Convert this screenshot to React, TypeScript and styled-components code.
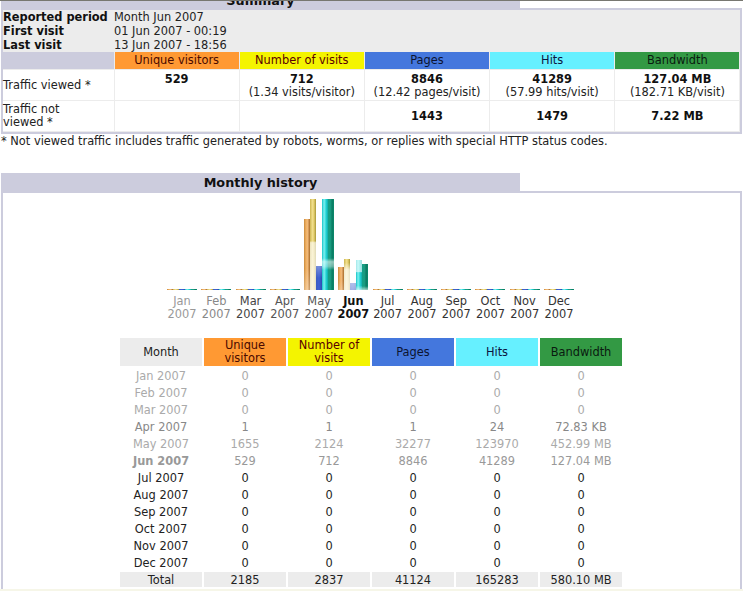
import React from "react";
import styled, { createGlobalStyle } from "styled-components";

const Global = createGlobalStyle`
  html, body { margin: 0; padding: 0; background: #fff; height: 591px; overflow: hidden; }
  body { font-family: "DejaVu Sans", Verdana, sans-serif; font-size: 11.4px; color: #111; }
`;

const Page = styled.div`
  width: 743px;
  height: 591px;
  display: flex;
  flex-direction: column;
  border-top: 1px solid #777770;
  box-sizing: border-box;
  overflow: hidden;
`;

const Section = styled.section<{ $gap?: number }>`
  margin: ${(p) => p.$gap ?? 0}px 0 0 1px;
  width: 741px;
  flex: none;
`;

const TitleBar = styled.h2<{ $clipped?: boolean }>`
  margin: 0;
  width: 519px;
  height: ${(p) => (p.$clipped ? 8 : 19)}px;
  background: #ccccdd;
  display: flex;
  justify-content: center;
  align-items: ${(p) => (p.$clipped ? "flex-end" : "center")};
  overflow: hidden;
  font-size: 12.8px;
  font-weight: bold;
  line-height: 16px;
  color: #111;
`;

const Panel = styled.div<{ $open?: boolean }>`
  border: 2px solid #ccccdd;
  border-bottom-width: ${(p) => (p.$open ? 0 : 2)}px;
  background: #fff;
  margin-top: -1px;
  box-sizing: border-box;
`;

const SummaryTable = styled.table`
  width: 737px;
  table-layout: fixed;
  border-collapse: collapse;
  background: #fff;
  font-size: 11.4px;
  line-height: 13px;
`;

const InfoRow = styled.tr`
  background: #ececec;
  height: 14px;
  &:first-child th, &:first-child td { padding-top: 1px; }
`;

const InfoLabel = styled.th`
  padding: 0;
  text-align: left;
  font-weight: bold;
  color: #111;
`;

const InfoValue = styled.td`
  padding: 0;
  color: #222;
`;

const Swatch = styled.th<{ $bg: string; $ink: string; $first?: boolean }>`
  background: ${(p) => p.$bg};
  color: ${(p) => p.$ink};
  font-weight: normal;
  height: 17px;
  padding: 0;
  text-align: center;
  border: 1px solid #ececec;
  border-left-width: ${(p) => (p.$first ? 0 : 1)}px;
  border-top-width: 0;
`;

const RowLabel = styled.td`
  padding: 0 10px 0 0;
  height: 30px;
  border-bottom: 1px solid #ececec;
  color: #222;
`;

const Cell = styled.td<{ $top?: boolean }>`
  padding: ${(p) => (p.$top ? "3px 0 0" : "0")};
  vertical-align: ${(p) => (p.$top ? "top" : "middle")};
  text-align: center;
  border: 1px solid #ececec;
  border-top-width: 0;
  color: #222;
  b { color: #111; display: block; }
`;

const Note = styled.p`
  margin: 0;
  height: 14px;
  padding-top: 1px;
  line-height: 13px;
  white-space: nowrap;
  color: #222;
`;

const Chart = styled.div`
  display: flex;
  justify-content: center;
  padding: 6px 2px 0 0;
`;

const MonthColumn = styled.div`
  width: 34.27px;
  display: flex;
  flex-direction: column;
  align-items: center;
`;

const Bars = styled.div`
  height: 91px;
  display: flex;
  align-items: flex-end;
`;

const Bar = styled.div<{ $h: number; $fill: string; $wash?: string }>`
  width: 6px;
  height: ${(p) => p.$h}px;
  background: ${(p) => (p.$wash ? `${p.$wash}, ` : "")}${(p) => p.$fill};
`;

const MonthLabel = styled.div<{ $ink: string; $bold?: boolean }>`
  margin-top: 5px;
  text-align: center;
  line-height: 13px;
  font-size: 11.4px;
  color: ${(p) => p.$ink};
  font-weight: ${(p) => (p.$bold ? "bold" : "normal")};
  span { display: block; }
`;

const HistoryTable = styled.table`
  margin: 15px 0 0 115px;
  width: 506px;
  table-layout: fixed;
  border-collapse: separate;
  border-spacing: 2px;
  font-size: 11.4px;
  line-height: 13px;
`;

const HistoryHead = styled.th<{ $bg: string; $ink: string }>`
  background: ${(p) => p.$bg};
  color: ${(p) => p.$ink};
  font-weight: normal;
  height: 28px;
  padding: 0 2px;
  text-align: center;
`;

const HistoryCell = styled.td<{ $ink: string; $bold?: boolean }>`
  height: 14px;
  padding: 1px 0 0;
  text-align: center;
  color: ${(p) => p.$ink};
  font-weight: ${(p) => (p.$bold ? "bold" : "normal")};
  line-height: 14px;
`;

const TotalCell = styled.td`
  height: 14px;
  padding: 1px 0 0;
  text-align: center;
  line-height: 14px;
  background: #ececec;
  color: #222;
`;

const FooterStrip = styled.div`
  position: absolute;
  left: 0;
  right: 0;
  top: 589px;
  height: 2px;
  background: #f6f6e8;
`;

const metrics = [
  { label: "Unique visitors", bg: "#ff9933", ink: "#4a0a00" },
  { label: "Number of visits", bg: "#f4f400", ink: "#5a0000" },
  { label: "Pages", bg: "#4477dd", ink: "#0c1430" },
  { label: "Hits", bg: "#66f0ff", ink: "#0c1440" },
  { label: "Bandwidth", bg: "#339944", ink: "#0a1a10" },
];

const fills = [
  "linear-gradient(90deg,#c98a3c,#f2b264 35%,#f0b878 60%,#a86a28)",
  "linear-gradient(90deg,#cdb650,#f0de8c 40%,#e6d070 65%,#a69636)",
  "linear-gradient(90deg,#3a5cc0,#3f62d4 50%,#2c4cb0)",
  "linear-gradient(90deg,#14c4c8,#7cf0f0 35%,#20d4d4 70%,#14a8a8)",
  "linear-gradient(90deg,#12a088,#1a9c80 40%,#0a7c64 70%,#0c8a6c)",
];

const flat = [1, 1, 1, 1, 1];

const chart = [
  { m: "Jan", ink: "#999", bars: flat },
  { m: "Feb", ink: "#888", bars: flat },
  { m: "Mar", ink: "#444", bars: flat },
  { m: "Apr", ink: "#555", bars: flat },
  { m: "May", ink: "#555", bars: [71, 91, 24, 91, 91] },
  { m: "Jun", ink: "#111", bold: true, bars: [23, 31, 7, 30, 26] },
  { m: "Jul", ink: "#333", bars: flat },
  { m: "Aug", ink: "#333", bars: flat },
  { m: "Sep", ink: "#333", bars: flat },
  { m: "Oct", ink: "#333", bars: flat },
  { m: "Nov", ink: "#333", bars: flat },
  { m: "Dec", ink: "#333", bars: flat },
];

const washFor = (month: string, i: number): string | undefined => {
  if (month === "May") {
    if (i === 0) return "linear-gradient(180deg,transparent 70%,rgba(255,255,255,.28))";
    if (i === 1) return "linear-gradient(180deg,transparent 46%,rgba(255,255,255,.62) 48%,rgba(255,255,255,.7) 100%)";
    if (i === 2) return "linear-gradient(180deg,rgba(255,255,255,.3),transparent 50%)";
    if (i === 3 || i === 4)
      return "linear-gradient(180deg,transparent 65%,rgba(255,255,255,.55) 69%,rgba(255,255,255,.4) 74%,transparent 78%)";
  }
  if (month === "Jun") {
    if (i === 0) return "linear-gradient(180deg,transparent 60%,rgba(255,255,255,.2))";
    if (i === 1) return "linear-gradient(180deg,transparent 12%,rgba(255,255,255,.7) 35%,rgba(255,255,255,.75) 90%)";
    if (i === 2) return "linear-gradient(180deg,rgba(255,255,255,.6),rgba(255,255,255,.5))";
    if (i === 3) return "linear-gradient(180deg,rgba(255,255,255,.6) 40%,transparent 42%,transparent 85%,rgba(255,255,255,.6))";
    if (i === 4) return "linear-gradient(180deg,transparent 85%,rgba(255,255,255,.6))";
  }
  return undefined;
};

const history = [
  { m: "Jan 2007", ink: "#aaa", v: ["0", "0", "0", "0", "0"] },
  { m: "Feb 2007", ink: "#aaa", v: ["0", "0", "0", "0", "0"] },
  { m: "Mar 2007", ink: "#aaa", v: ["0", "0", "0", "0", "0"] },
  { m: "Apr 2007", ink: "#888", v: ["1", "1", "1", "24", "72.83 KB"] },
  { m: "May 2007", ink: "#aaa", v: ["1655", "2124", "32277", "123970", "452.99 MB"] },
  { m: "Jun 2007", ink: "#999", bold: true, v: ["529", "712", "8846", "41289", "127.04 MB"] },
  { m: "Jul 2007", ink: "#222", v: ["0", "0", "0", "0", "0"] },
  { m: "Aug 2007", ink: "#222", v: ["0", "0", "0", "0", "0"] },
  { m: "Sep 2007", ink: "#222", v: ["0", "0", "0", "0", "0"] },
  { m: "Oct 2007", ink: "#222", v: ["0", "0", "0", "0", "0"] },
  { m: "Nov 2007", ink: "#222", v: ["0", "0", "0", "0", "0"] },
  { m: "Dec 2007", ink: "#222", v: ["0", "0", "0", "0", "0"] },
];

const info = [
  ["Reported period", "Month Jun 2007"],
  ["First visit", "01 Jun 2007 - 00:19"],
  ["Last visit", "13 Jun 2007 - 18:56"],
];

const viewed = [
  ["529", ""],
  ["712", "(1.34 visits/visitor)"],
  ["8846", "(12.42 pages/visit)"],
  ["41289", "(57.99 hits/visit)"],
  ["127.04 MB", "(182.71 KB/visit)"],
];

export default function App() {
  return (
    <Page>
      <Global />
      <Section>
        <TitleBar $clipped>Summary</TitleBar>
        <Panel>
          <SummaryTable>
            <colgroup>
              <col width={111} />
              <col width={125.2} />
              <col width={125.2} />
              <col width={125.2} />
              <col width={125.2} />
              <col width={125.2} />
            </colgroup>
            <tbody>
              {info.map(([k, v]) => (
                <InfoRow key={k}>
                  <InfoLabel>{k}</InfoLabel>
                  <InfoValue colSpan={5}>{v}</InfoValue>
                </InfoRow>
              ))}
              <tr>
                <Swatch $bg="#ccccdd" $ink="#111" $first />
                {metrics.map((c) => (
                  <Swatch key={c.label} $bg={c.bg} $ink={c.ink}>
                    {c.label}
                  </Swatch>
                ))}
              </tr>
              <tr>
                <RowLabel>Traffic viewed *</RowLabel>
                {viewed.map(([a, b]) => (
                  <Cell key={a} $top>
                    <b>{a}</b>
                    {b}
                  </Cell>
                ))}
              </tr>
              <tr>
                <RowLabel>Traffic not viewed *</RowLabel>
                <Cell />
                <Cell />
                <Cell><b>1443</b></Cell>
                <Cell><b>1479</b></Cell>
                <Cell><b>7.22 MB</b></Cell>
              </tr>
            </tbody>
          </SummaryTable>
        </Panel>
        <Note>* Not viewed traffic includes traffic generated by robots, worms, or replies with special HTTP status codes.</Note>
      </Section>
      <Section $gap={24}>
        <TitleBar>Monthly history</TitleBar>
        <Panel $open>
          <Chart>
            {chart.map((c) => (
              <MonthColumn key={c.m}>
                <Bars>
                  {c.bars.map((h, i) => (
                    <Bar key={i} $h={h} $fill={fills[i]} $wash={washFor(c.m, i)} />
                  ))}
                </Bars>
                <MonthLabel $ink={c.ink} $bold={c.bold}>
                  <span>{c.m}</span>
                  <span>2007</span>
                </MonthLabel>
              </MonthColumn>
            ))}
          </Chart>
          <HistoryTable>
            <thead>
              <tr>
                <HistoryHead $bg="#ececec" $ink="#222">Month</HistoryHead>
                {metrics.map((c) => (
                  <HistoryHead key={c.label} $bg={c.bg} $ink={c.ink}>
                    {c.label}
                  </HistoryHead>
                ))}
              </tr>
            </thead>
            <tbody>
              {history.map((r) => (
                <tr key={r.m}>
                  <HistoryCell $ink={r.ink} $bold={r.bold}>{r.m}</HistoryCell>
                  {r.v.map((v, i) => (
                    <HistoryCell key={i} $ink={r.ink}>{v}</HistoryCell>
                  ))}
                </tr>
              ))}
              <tr>
                <TotalCell>Total</TotalCell>
                <TotalCell>2185</TotalCell>
                <TotalCell>2837</TotalCell>
                <TotalCell>41124</TotalCell>
                <TotalCell>165283</TotalCell>
                <TotalCell>580.10 MB</TotalCell>
              </tr>
            </tbody>
          </HistoryTable>
        </Panel>
      </Section>
      <FooterStrip />
    </Page>
  );
}
